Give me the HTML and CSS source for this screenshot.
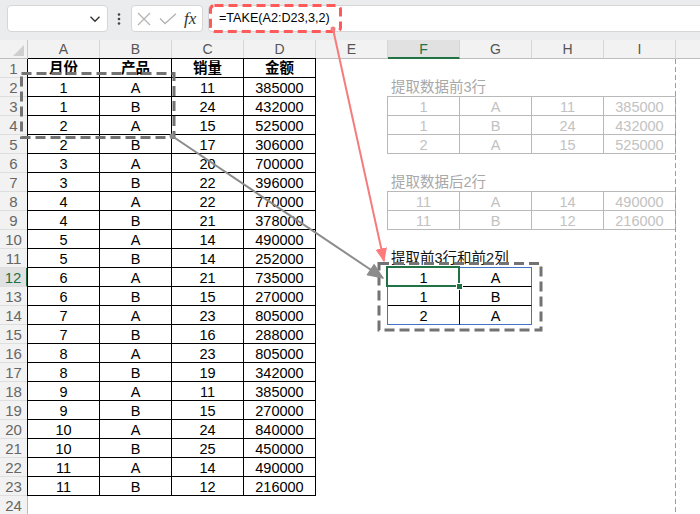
FILE: index.html
```html
<!DOCTYPE html>
<html lang="zh-CN">
<head>
<meta charset="utf-8">
<title>TAKE</title>
<link rel="stylesheet" href="styles.css">
</head>
<body>
<div class="app">
  <div class="toolbar">
    <div class="namebox">
      <svg class="chev" width="12" height="8" viewBox="0 0 12 8"><path d="M1.5 1.8 L6 6.2 L10.5 1.8" fill="none" stroke="#333" stroke-width="1.4"/></svg>
    </div>
    <svg class="vdots" width="4" height="12" viewBox="0 0 4 12"><circle cx="2" cy="1.5" r="1.3" fill="#444"/><circle cx="2" cy="6" r="1.3" fill="#444"/><circle cx="2" cy="10.5" r="1.3" fill="#444"/></svg>
    <div class="fxbox">
      <svg width="14" height="14" viewBox="0 0 14 14"><path d="M1 1 L13 13 M13 1 L1 13" stroke="#b3b3b3" stroke-width="1.3" fill="none"/></svg>
      <svg width="18" height="12" viewBox="0 0 18 12"><path d="M1 5.5 L6 10.5 L17 0.8" stroke="#b3b3b3" stroke-width="1.3" fill="none"/></svg>
      <span class="fx">fx</span>
    </div>
    <div class="formula">=TAKE(A2:D23,3,2)</div>
  </div>

  <div class="colhead">
    <div class="corner"><span class="tri"></span></div>
    <div class="ch">A</div><div class="ch">B</div><div class="ch">C</div><div class="ch">D</div><div class="ch">E</div>
    <div class="ch sel">F</div><div class="ch">G</div><div class="ch">H</div><div class="ch">I</div><div class="ch rest"></div>
  </div>

  <div class="body">
    <div class="rowhead">
      <div class="rh">1</div><div class="rh">2</div><div class="rh">3</div><div class="rh">4</div><div class="rh">5</div><div class="rh">6</div>
      <div class="rh">7</div><div class="rh">8</div><div class="rh">9</div><div class="rh">10</div><div class="rh">11</div><div class="rh sel">12</div>
      <div class="rh">13</div><div class="rh">14</div><div class="rh">15</div><div class="rh">16</div><div class="rh">17</div><div class="rh">18</div>
      <div class="rh">19</div><div class="rh">20</div><div class="rh">21</div><div class="rh">22</div><div class="rh">23</div><div class="rh">24</div>
    </div>

    <div class="cells">
      <div class="tbl main">
        <div class="hd">月份</div><div class="hd">产品</div><div class="hd">销量</div><div class="hd">金额</div>
        <div>1</div><div>A</div><div>11</div><div>385000</div>
        <div>1</div><div>B</div><div>24</div><div>432000</div>
        <div>2</div><div>A</div><div>15</div><div>525000</div>
        <div>2</div><div>B</div><div>17</div><div>306000</div>
        <div>3</div><div>A</div><div>20</div><div>700000</div>
        <div>3</div><div>B</div><div>22</div><div>396000</div>
        <div>4</div><div>A</div><div>22</div><div>770000</div>
        <div>4</div><div>B</div><div>21</div><div>378000</div>
        <div>5</div><div>A</div><div>14</div><div>490000</div>
        <div>5</div><div>B</div><div>14</div><div>252000</div>
        <div>6</div><div>A</div><div>21</div><div>735000</div>
        <div>6</div><div>B</div><div>15</div><div>270000</div>
        <div>7</div><div>A</div><div>23</div><div>805000</div>
        <div>7</div><div>B</div><div>16</div><div>288000</div>
        <div>8</div><div>A</div><div>23</div><div>805000</div>
        <div>8</div><div>B</div><div>19</div><div>342000</div>
        <div>9</div><div>A</div><div>11</div><div>385000</div>
        <div>9</div><div>B</div><div>15</div><div>270000</div>
        <div>10</div><div>A</div><div>24</div><div>840000</div>
        <div>10</div><div>B</div><div>25</div><div>450000</div>
        <div>11</div><div>A</div><div>14</div><div>490000</div>
        <div>11</div><div>B</div><div>12</div><div>216000</div>
      </div>

      <div class="ttl faded t1-title">提取数据前3行</div>
      <div class="tbl faded4 t1">
        <div>1</div><div>A</div><div>11</div><div>385000</div>
        <div>1</div><div>B</div><div>24</div><div>432000</div>
        <div>2</div><div>A</div><div>15</div><div>525000</div>
      </div>

      <div class="ttl faded t2-title">提取数据后2行</div>
      <div class="tbl faded4 t2">
        <div>11</div><div>A</div><div>14</div><div>490000</div>
        <div>11</div><div>B</div><div>12</div><div>216000</div>
      </div>

      <div class="ttl t3-title">提取前3行和前2列</div>
      <div class="tbl t3">
        <div>1</div><div class="last">A</div>
        <div>1</div><div class="last">B</div>
        <div class="bot">2</div><div class="last bot">A</div>
      </div>
    </div>
  </div>

  <svg class="overlay" width="700" height="514" viewBox="0 0 700 514">
    <defs>
      <marker id="ar" viewBox="0 0 12 10" refX="11" refY="5" markerWidth="14" markerHeight="12" markerUnits="userSpaceOnUse" orient="auto">
        <path d="M0 0 L12 5 L0 10 Z" fill="#ff7b7b"/>
      </marker>
      <marker id="ag" viewBox="0 0 12 10" refX="11" refY="5" markerWidth="18" markerHeight="14" markerUnits="userSpaceOnUse" orient="auto">
        <path d="M0 0 L12 5 L0 10 Z" fill="#8c8c8c"/>
      </marker>
    </defs>
    <line x1="675.5" y1="59" x2="675.5" y2="514" stroke="#9c9c9c" stroke-width="1" stroke-dasharray="5 3"/>
    <rect x="210.5" y="5.5" width="130" height="26" rx="4" fill="none" stroke="#ff5a5a" stroke-width="3" stroke-dasharray="9 5"/>
    <rect x="21.5" y="73.5" width="152.5" height="64" fill="none" stroke="#737373" stroke-width="3" stroke-dasharray="10 5"/>
    <rect x="379" y="263.5" width="162" height="66.5" fill="none" stroke="#737373" stroke-width="3" stroke-dasharray="10 5"/>
    <rect x="387" y="267" width="72" height="19" fill="none" stroke="#217346" stroke-width="2"/>
    <rect x="456.5" y="283.5" width="6" height="6" fill="#217346" stroke="#fff" stroke-width="1"/>
    <line x1="172" y1="136" x2="383" y2="278" stroke="#8c8c8c" stroke-width="2" marker-end="url(#ag)"/>
    <circle cx="172" cy="136" r="2.5" fill="#8c8c8c"/>
    <line x1="333" y1="29" x2="384" y2="261" stroke="#f47c7c" stroke-width="2" marker-end="url(#ar)"/>
    <circle cx="333" cy="29" r="2.5" fill="#f47c7c"/>
  </svg>
</div>
</body>
</html>
```
FILE: styles.css
```css
* { box-sizing: border-box; }
html, body { margin: 0; padding: 0; }
body {
  width: 700px;
  height: 514px;
  overflow: hidden;
  background: #fff;
  font-family: "Liberation Sans", "Noto Sans CJK SC", sans-serif;
  color: #000;
}
.app { position: relative; width: 700px; height: 514px; overflow: hidden; }

/* toolbar */
.toolbar {
  height: 40px;
  background: #eaecee;
  display: flex;
  align-items: flex-start;
  padding: 5px 0 0 7px;
}
.namebox {
  width: 101px;
  height: 27px;
  background: #fff;
  border: 1px solid #d6d6d6;
  border-radius: 4px;
  display: flex;
  align-items: center;
  justify-content: flex-end;
  padding-right: 6px;
}
.vdots { margin: 8px 0 0 9px; }
.fxbox {
  margin-left: 10px;
  width: 72px;
  height: 27px;
  background: #fff;
  border: 1px solid #d6d6d6;
  border-radius: 4px;
  display: flex;
  align-items: center;
  gap: 8px;
  padding-left: 5px;
}
.fx {
  font-family: "Liberation Serif", "DejaVu Serif", serif;
  font-style: italic;
  font-size: 17px;
  color: #333;
  margin-left: -1px;
}
.formula {
  margin-left: 5px;
  flex: 1;
  height: 27px;
  margin-right: -8px;
  background: #fff;
  border: 1px solid #d6d6d6;
  border-radius: 4px;
  font-size: 12.6px;
  line-height: 25px;
  padding-left: 10px;
  color: #000;
}

/* column header */
.colhead {
  display: flex;
  height: 19px;
  background: #f2f2f2;
}
.corner {
  width: 28px;
  height: 19px;
  border-right: 1px solid #c8c8c8;
  border-bottom: 1px solid #bdbdbd;
  position: relative;
}
.tri {
  position: absolute;
  right: 3px;
  bottom: 2px;
  width: 0;
  height: 0;
  border-left: 11px solid transparent;
  border-bottom: 11px solid #cfcfcf;
}
.ch {
  width: 72px;
  height: 19px;
  border-right: 1px solid #d6d6d6;
  border-bottom: 1px solid #bdbdbd;
  text-align: center;
  font-size: 14px;
  line-height: 19px;
  color: #555;
}
.ch.sel {
  background: #e1e1e1;
  color: #217346;
  border-bottom: 2px solid #217346;
}
.ch.rest { flex: 1; border-right: none; }

/* body */
.body { display: flex; }
.rowhead {
  width: 28px;
  display: flex;
  flex-direction: column;
  background: #f2f2f2;
}
.rh {
  height: 19px;
  border-right: 1px solid #bdbdbd;
  border-bottom: 1px solid #dedede;
  text-align: center;
  font-size: 15px;
  line-height: 19px;
  color: #666;
}
.rh.sel {
  background: #e1e1e1;
  color: #217346;
  border-right: 2px solid #217346;
}

.cells {
  flex: 1;
  display: grid;
  grid-template-columns: repeat(9, 72px) 1fr;
  grid-template-rows: repeat(24, 19px);
}

/* tables */
.tbl {
  display: grid;
  grid-auto-rows: 19px;
  align-self: start;
  margin: -1px 0 0 -1px;
  border-top: 1px solid #000;
  border-left: 1px solid #000;
}
.tbl > div {
  border-right: 1px solid #000;
  border-bottom: 1px solid #000;
  text-align: center;
  font-size: 14.5px;
  line-height: 20px;
  white-space: nowrap;
  overflow: hidden;
}
.tbl > .hd { font-weight: bold; line-height: 19px; }

.main { grid-column: 1 / 5; grid-row: 1 / 24; grid-template-columns: repeat(4, 72px); }

.faded4 {
  grid-template-columns: repeat(4, 72px);
  border-color: #b9b9b9;
}
.faded4 > div { border-color: #b9b9b9; color: #c2c2c2; }

.t1 { grid-column: 6 / 10; grid-row: 3 / 6; }
.t2 { grid-column: 6 / 10; grid-row: 8 / 10; }
.t3 {
  grid-column: 6 / 8;
  grid-row: 12 / 15;
  grid-template-columns: repeat(2, 72px);
  border-top-color: #4472c4;
  border-left-color: #4472c4;
}
.t3 > .last { border-right-color: #4472c4; }
.t3 > .bot { border-bottom-color: #4472c4; }

.ttl {
  align-self: end;
  padding-left: 3px;
  font-size: 14.5px;
  line-height: 19px;
  white-space: nowrap;
  color: #111;
}
.ttl.faded { color: #a8a8a8; }
.t1-title { grid-column: 6 / 10; grid-row: 2; }
.t2-title { grid-column: 6 / 10; grid-row: 7; }
.t3-title { grid-column: 6 / 9; grid-row: 11; }

/* overlay annotations */
.overlay {
  position: absolute;
  left: 0;
  top: 0;
  pointer-events: none;
}
```
